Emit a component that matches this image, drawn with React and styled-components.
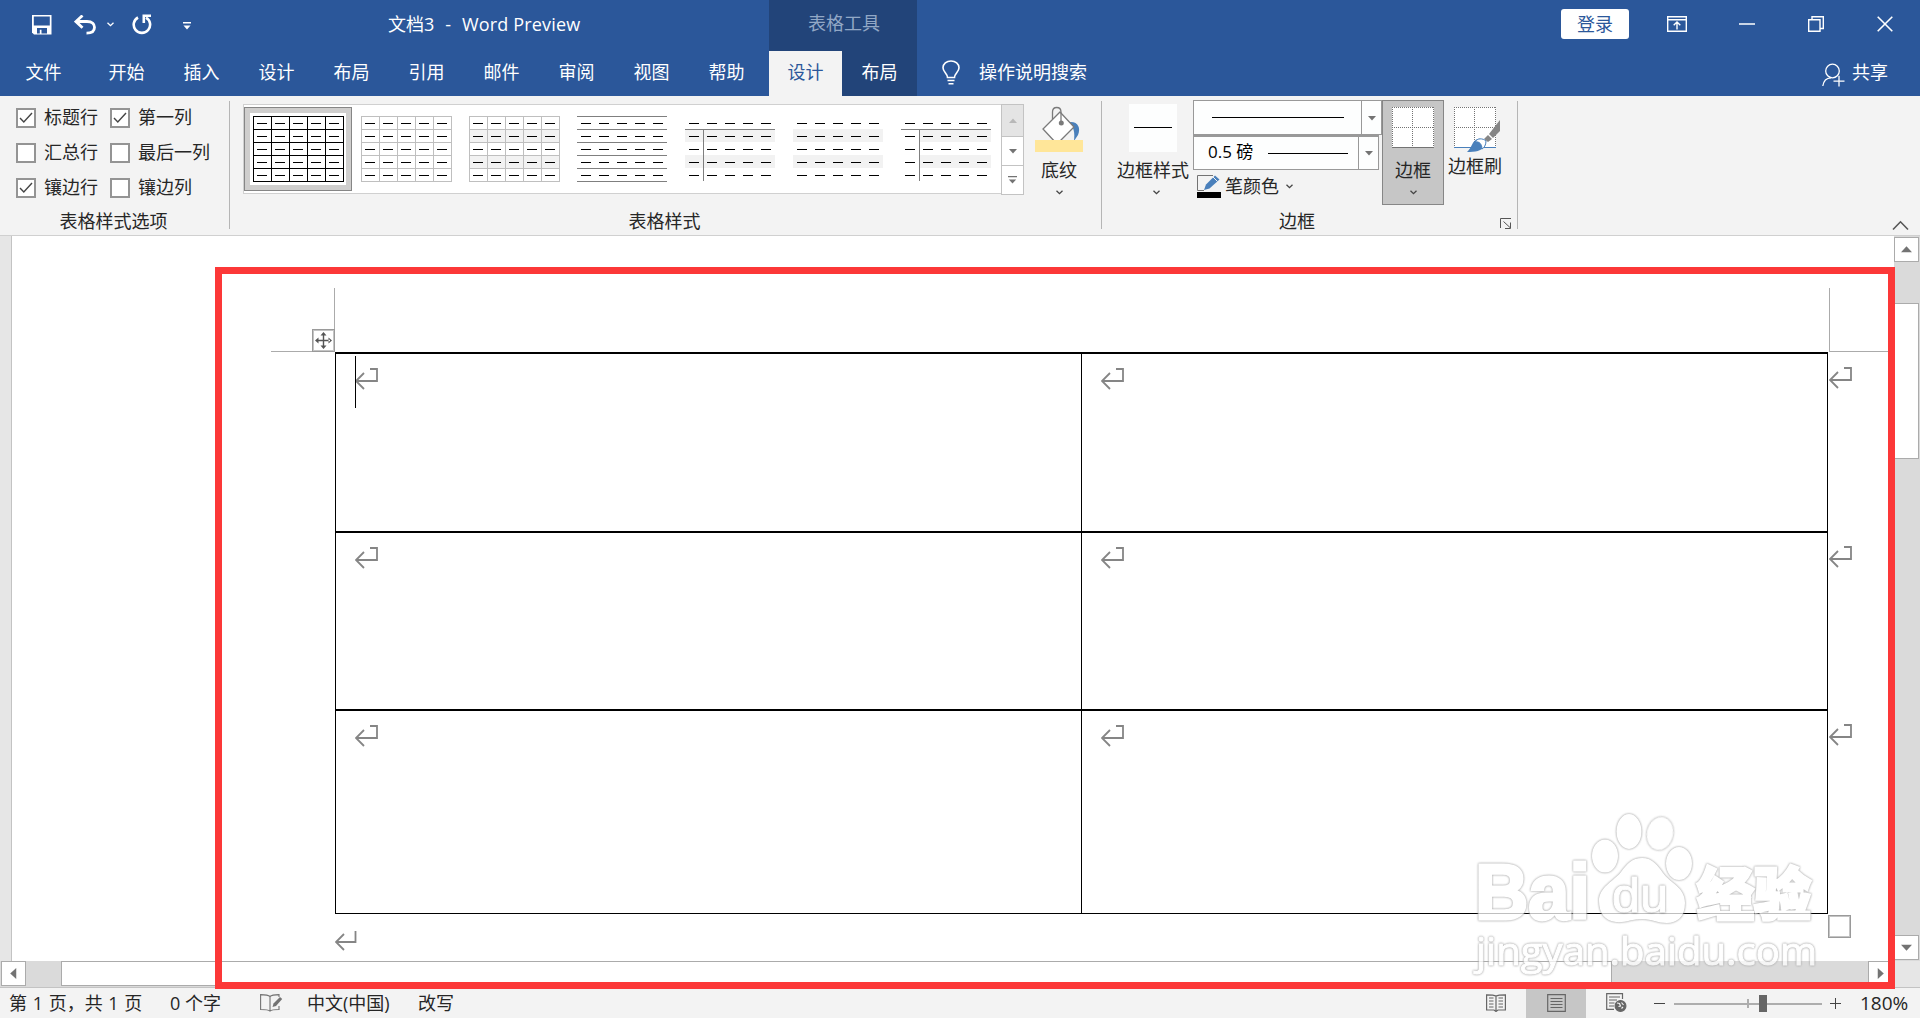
import styled, { createGlobalStyle, css } from 'styled-components'

const GlobalStyle = createGlobalStyle`
  * {
    box-sizing: border-box;
  }

  body {
    margin: 0;
    overflow: hidden;
    font-family: 'Open Sans', 'Noto Sans CJK SC', sans-serif;
    font-size: 18px;
    line-height: 24px;
    color: #262626;
  }

  svg {
    display: block;
    flex: none;
  }
`

const Window = styled.div`
  position: relative;
  display: grid;
  grid-template-rows: 96px 140px 752px 30px;
  width: 1920px;
  height: 1018px;
  overflow: hidden;
  white-space: nowrap;
`

/* header */

const Header = styled.header`
  display: grid;
  grid-template-columns: 769px 148px 1fr;
  background: #2b579a;
  color: #fff;
`

const HeaderPart = styled.div`
  display: grid;
  grid-template-rows: 51px 45px;
  background: ${(p) => (p.$dark ? '#224479' : 'transparent')};
`

const TitleRow = styled.div`
  display: flex;
  align-items: center;
  padding-bottom: 4px;
  padding-left: ${(p) => p.$left || 0}px;
`

const QuickTools = styled.div`
  display: flex;
  align-items: center;
  width: 356px;
  padding-top: 2px;
`

const Title = styled.div`
  display: flex;
  gap: 11px;

  & > :last-child {
    letter-spacing: 0.15px;
  }
`

const ContextTitle = styled.div`
  display: flex;
  justify-content: center;
  align-items: center;
  padding: 0 0 5px 2px;
  color: #92a8c6;
`

const TabRow = styled.nav`
  display: flex;
`

const Tab = styled.div`
  display: flex;
  justify-content: center;
  align-items: center;
  padding-bottom: 3px;
  padding-right: ${(p) => (p.$file ? 2 : 0)}px;
  width: ${(p) => p.$width || 75}px;
  color: ${(p) => (p.$active ? '#2b579a' : '#fff')};
  background: ${(p) => (p.$active ? '#f3f3f3' : 'transparent')};
`

const Search = styled.div`
  display: flex;
  align-items: center;
  gap: 19px;
  padding: 0 0 3px 25px;
`

const Share = styled.div`
  display: flex;
  align-items: center;
  gap: 7px;
  margin-left: auto;
  padding: 0 32px 3px 0;

  & > svg {
    margin-top: 5px;
  }
`

const Login = styled.button`
  width: 68px;
  height: 30px;
  margin: 0 38px 0 644px;
  padding: 0;
  border: 0;
  border-radius: 3px;
  background: #fff;
  color: #2b579a;
  font: inherit;
`

const WindowButtons = styled.div`
  display: flex;
  align-items: center;
`

/* ribbon */

const Ribbon = styled.section`
  position: relative;
  display: flex;
  background: #f3f3f3;
  border-bottom: 1px solid #d0d0d0;
`

const Group = styled.div`
  position: relative;
  display: flex;
  flex-direction: column;
  width: ${(p) => p.$width}px;

  &::after {
    content: '';
    position: absolute;
    top: 5px;
    right: 0;
    width: 1px;
    height: 128px;
    background: #b5b5b5;
  }
`

const GroupBody = styled.div`
  display: flex;
  height: 113px;
`

const GroupName = styled.div`
  text-align: center;
  padding-right: ${(p) => p.$shift || 0}px;
`

const Options = styled.div`
  display: grid;
  grid-template-columns: 94px 1fr;
  grid-template-rows: repeat(3, 35px);
  padding: 4px 0 0 16px;
`

const Option = styled.label`
  display: flex;
  align-items: center;
  gap: 8px;
`

const OptionText = styled.span`
  padding-bottom: 2px;
`

const Check = styled.span`
  display: grid;
  place-items: center;
  width: 20px;
  height: 20px;
  border: 2px solid #949494;
  background: #fff;
`

const Gallery = styled.div`
  display: flex;
  width: 781px;
  height: 91px;
  margin: 8px 0 0 13px;
`

const GalleryItems = styled.div`
  display: flex;
  width: 758px;
  height: 90px;
  padding-top: 2px;
  border: 1px solid #d0d0d0;
  border-right: 0;
  background: #fff;
`

const GalleryItem = styled.div`
  width: 108px;
  height: 84px;
  padding: 8px 0 0 8px;
  border: 1px solid transparent;

  ${(p) =>
    p.$selected &&
    css`
      padding: 5px;
      border-color: #868686;
      background: #cfcecd;

      & > svg {
        width: 96px;
        height: 72px;
        padding: 3px 2px 2px 3px;
        background: #fff;
      }
    `}
`

const GalleryScroll = styled.div`
  display: grid;
  grid-template-rows: 33px 29px 29px;
  width: 23px;
`

const ScrollCell = styled.div`
  display: grid;
  place-items: center;
  border: 1px solid #c3c3c3;
  border-top-width: ${(p) => (p.$first ? 1 : 0)}px;
  background: ${(p) => (p.$first ? '#e4e4e4' : '#fff')};
`

const BigButton = styled.div`
  display: flex;
  flex-direction: column;
  align-items: center;
  width: ${(p) => p.$width}px;
  height: 105px;
  margin: 4px 0 0 ${(p) => p.$left || 0}px;
  border: 1px solid ${(p) => (p.$pressed ? '#868686' : 'transparent')};
  background: ${(p) => (p.$pressed ? '#c6c6c6' : 'transparent')};
`

const BigIcon = styled.div`
  display: flex;
  height: ${(p) => p.$height || 57}px;
  padding: 3px 0 0 ${(p) => p.$left || 0}px;
`

const Label = styled.div`
  height: 24px;
  margin-bottom: 8px;
`

const PenColumn = styled.div`
  width: 189px;
  padding-top: 4px;
`

const Combo = styled.div`
  display: flex;
  align-items: center;
  width: ${(p) => p.$width}px;
  height: 35px;
  border: 1px solid #999;
  border-top-width: ${(p) => (p.$second ? 2 : 1)}px;
  padding-left: ${(p) => p.$left}px;
  background: #fdfefe;
  color: #000;
`

const ComboText = styled.span`
  width: 60px;
  padding-bottom: 2px;
  font-size: 17px;
`

const Stroke = styled.span`
  width: ${(p) => p.$width}px;
  height: 1px;
  background: #000;
`

const ComboArrow = styled.span`
  display: grid;
  place-items: center;
  align-self: stretch;
  width: 20px;
  margin-left: auto;
  border-left: 1px solid #999;
`

const PenColor = styled.div`
  display: flex;
  align-items: center;
  gap: 4px;
  height: 32px;
  padding-left: 4px;
`

const Launcher = styled.div`
  position: absolute;
  right: 6px;
  top: 122px;
`

const Collapse = styled.div`
  position: absolute;
  right: 11px;
  top: 124px;
`

/* document */

const Workspace = styled.main`
  display: grid;
  grid-template-columns: 12px 1882px 26px;
  grid-template-rows: 725px 27px;
  background: #e6e6e6;
`

const Gutter = styled.div`
  border-right: 1px solid #c3c3c3;
`

const Page = styled.div`
  position: relative;
  padding-top: 52px;
  background: #fff;
`

const Margins = styled.div`
  display: flex;
  justify-content: space-between;
  height: 64px;
  padding-left: 259px;
`

const Corner = styled.div`
  width: ${(p) => (p.$right ? 65 : 64)}px;
  border: solid #ababab;
  border-width: ${(p) => (p.$right ? '0 0 1px 1px' : '0 1px 1px 0')};
`

const Table = styled.div`
  display: grid;
  grid-template-columns: 746px 746px 60px;
  grid-template-rows: 179px 178px 205px;
  margin-left: 323px;
`

const Cell = styled.div`
  padding: 14px 0 0 19px;
  border: solid #000;
  border-width: 2px 0 ${(p) => (p.$last ? 1 : 0)}px 1px;
`

const RowEnd = styled.div`
  padding: 15px 0 0 1px;
  border-left: 1px solid #000;
`

const LastMark = styled.div`
  padding: 17px 0 0 323px;
`

const Handle = styled.div`
  position: absolute;
  left: 300px;
  top: 93px;
  width: 23px;
  height: 23px;
  display: grid;
  place-items: center;
  border: 1px solid #9a9a9a;
  box-shadow: inset 0 0 0 1px #c4c4c4;
  background: #fff;
`

const Resize = styled(Handle)`
  left: 1816px;
  top: 679px;
`

const Caret = styled.div`
  position: absolute;
  left: 343px;
  top: 120px;
  width: 1px;
  height: 52px;
  background: #000;
`

const VScroll = styled.div`
  display: flex;
  flex-direction: column;
  height: 725px;
  padding: 1px 1px 0 0;
  background: #dadada;
`

const HScroll = styled.div`
  display: flex;
  width: 1894px;
  height: 26px;
  padding-left: 1px;
  background: #dadada;
`

const ScrollButton = styled.div`
  display: grid;
  place-items: center;
  flex: none;
  width: 25px;
  height: 25px;
  border: 1px solid #ababab;
  background: #fff;
`

const Track = styled.div`
  flex: none;
  width: ${(p) => p.$width || 25}px;
  height: ${(p) => p.$height || 25}px;
`

const Thumb = styled(Track)`
  border: 1px solid #ababab;
  background: #fff;
`

const ScrollCorner = styled.div`
  grid-column: 1 / 4;
  display: flex;
  border-bottom: 1px solid #c3c3c3;
`

/* status bar */

const Status = styled.footer`
  display: flex;
  align-items: center;
  padding-left: 9px;
  background: #f3f3f3;
`

const StatusText = styled.div`
  width: ${(p) => p.$width}px;
  padding-bottom: 1px;
  word-spacing: ${(p) => p.$space || 0}px;
`

const Views = styled.div`
  display: flex;
  align-self: stretch;
  margin-left: auto;
`

const View = styled.div`
  display: grid;
  place-items: center;
  width: 60px;
  padding-bottom: 1px;
  background: ${(p) => (p.$active ? '#c6c6c6' : 'transparent')};
`

const Zoom = styled.div`
  display: flex;
  align-items: center;
  width: 274px;
  padding-left: 7px;
`

const Percent = styled.div`
  margin-left: 17px;
  font-size: 19px;
`

/* overlays */

const Frame = styled.div`
  position: absolute;
  left: 215px;
  top: 267px;
  width: 1680px;
  height: 722px;
  border: 7px solid #fc3838;
`

const Watermark = styled.svg`
  position: absolute;
  left: 1465px;
  top: 800px;
  overflow: visible;
  opacity: 0.75;
  fill: #fff;

  & > * {
    filter: drop-shadow(0 0 1px #999) drop-shadow(0 0 0.5px #bbb);
  }
`

const WatermarkText = styled.text`
  font-family: ${(p) => p.$font};
  font-size: ${(p) => p.$size}px;
  font-weight: ${(p) => p.$weight || 400};
  stroke: #fff;
  stroke-width: ${(p) => p.$stroke || 0}px;
`

const Down = ({ color = '#fff' }) => (
  <svg width='7' height='5' viewBox='0 0 7 5' fill='none' stroke={color} strokeWidth='1.3'>
    <path d='M.5 .7 3.5 3.7 6.5 .7' />
  </svg>
)

const Triangle = ({ dir = 'down', color = '#737373', w = 8 }) => {
  const turn = { down: 0, up: 180, left: 90, right: 270 }[dir]
  return (
    <svg width={w} height={w} viewBox='0 0 10 10' fill={color}>
      <path d='M0 2.5H10L5 8Z' transform={`rotate(${turn} 5 5)`} />
    </svg>
  )
}

const ReturnMark = () => (
  <svg width='23' height='22' viewBox='0 0 23 22' fill='none' stroke='#858585' strokeWidth='1.8'>
    <path d='M15 1H22V13H1M9 5 1 13 9 21' />
  </svg>
)

const borders = {
  black: '#000',
  gray: '#bfbfbf',
  dark: '#7f7f7f',
}

const styles = [
  { grid: 'black' },
  { grid: 'gray' },
  { grid: 'gray', band: 0 },
  { rows: 'dark' },
  { head: true, band: 0 },
  { band: 0 },
  { head: true, band: 18 },
]

const n5 = [0, 1, 2, 3, 4]
const n6 = [0, 1, 2, 3, 4, 5]

const TableThumb = ({ grid, rows, head, band }) => (
  <svg width='91' height='67' viewBox='0 0 91 67' shapeRendering='crispEdges'>
    {band !== undefined &&
      [13, 39].map((y) => <rect key={y} x={band} y={y} width={90 - band} height='13' fill='#f2f2f2' />)}
    {(grid || rows) &&
      n6.map((i) => <rect key={i} y={i * 13} width={grid ? 91 : 90} height='1' fill={borders[grid || rows]} />)}
    {grid && n6.map((i) => <rect key={i} x={i * 18} width='1' height='66' fill={borders[grid]} />)}
    {head && <path d='M0 13.5H90M18.5 13V65' stroke='#7f7f7f' />}
    {n5.map((r) => n5.map((c) => <rect key={`${r}${c}`} x={c * 18 + 4} y={r * 13 + 7} width='10' height='1' />))}
  </svg>
)

const BorderGrid = ({ brush }) => (
  <svg width={brush ? 46 : 42} height='48' viewBox={`0 0 ${brush ? 46 : 42} 48`}>
    <rect x='0' y='3' width='42' height='41' fill='#fff' />
    <path
      d='M0 3.5H42M0 23.5H42M.5 3V43M20.5 3V43M41.5 3V43'
      stroke='#737373'
      strokeDasharray='1 1'
      shapeRendering='crispEdges'
    />
    <path d='M0 43.5H42' stroke={brush ? '#4a80bb' : '#737373'} />
    {brush && (
      <g>
        <path d='M46 16V27L39 34 35 30Z' fill='#858585' />
        <path d='M34 31 38 35 34 38 30 35Z' fill='#858585' />
        <path d='M13 48C18 44 18 36 24 35 30 34 33 38 31 42 28 47 21 48 13 48Z' fill='#4a80bb' />
        <path d='M21 38C23 34 29 34 32 37 32 41 30 44 28 45 28 40 25 37 21 38Z' fill='#fff' stroke='#4a80bb' />
      </g>
    )}
  </svg>
)

const options = [
  ['标题行', true],
  ['第一列', true],
  ['汇总行', false],
  ['最后一列', false],
  ['镶边行', true],
  ['镶边列', false],
]

const tabs = ['开始', '插入', '设计', '布局', '引用', '邮件', '审阅', '视图', '帮助']

const App = () => {
  return (
    <Window>
      <GlobalStyle />
      <Header>
        <HeaderPart>
          <TitleRow $left={32}>
            <QuickTools>
              <svg width='20' height='20' viewBox='0 0 20 20'>
                <path d='M0 0H19.5V19.5H2L0 17.5Z' fill='#fff' />
                <path d='M1.8 1.5H17.8V10.5H1.8ZM5 13H15V18.5H9.5V14.7H7.8V18.5H5Z' fill='#2b579a' />
              </svg>
              <svg width='22' height='20' viewBox='0 0 22 20' style={{ marginLeft: 22 }} fill='none' stroke='#fff'>
                <path d='M2 6.5H13C18.5 6.5 20.5 9.5 20.5 12.3 20.5 16 17.5 18.2 12.5 18.2' strokeWidth='2.8' />
                <path d='M8.5 .5 2 6.6 8.5 12.8' strokeWidth='2.8' />
              </svg>
              <div style={{ margin: '0 18px 0 11px' }}>
                <Down />
              </div>
              <svg width='20' height='21' viewBox='0 0 20 21' fill='none' stroke='#fff' strokeWidth='2.6'>
                <path d='M6 3.5A8.2 8.2 0 1 0 14 3.6' />
                <path d='M19 1.7H11.8V9' />
              </svg>
              <svg width='8' height='8' viewBox='0 0 8 8' style={{ margin: '2px 0 0 31px' }} fill='#fff'>
                <path d='M0 0H8V1.5H0ZM.5 3.5H7.5L4 7.5Z' />
              </svg>
            </QuickTools>
            <Title>
              <span>文档3</span>
              <span>-</span>
              <span>Word Preview</span>
            </Title>
          </TitleRow>
          <TabRow>
            <Tab $width={89} $file>
              文件
            </Tab>
            {tabs.map((tab) => (
              <Tab key={tab}>{tab}</Tab>
            ))}
          </TabRow>
        </HeaderPart>
        <HeaderPart $dark>
          <ContextTitle>表格工具</ContextTitle>
          <TabRow>
            <Tab $active $width={73}>
              设计
            </Tab>
            <Tab>布局</Tab>
          </TabRow>
        </HeaderPart>
        <HeaderPart>
          <TitleRow>
            <Login>登录</Login>
            <WindowButtons>
              <svg width='20' height='16' viewBox='0 0 20 16' fill='none' stroke='#fff' strokeWidth='1.4'>
                <path d='M.7 .7H19.3V15.3H.7ZM.7 3.8H19.3M10 13.5V6.2M6.7 9.2 10 6 13.3 9.2' />
              </svg>
              <svg width='16' height='2' style={{ marginLeft: 52 }}>
                <path d='M0 1H16' stroke='#fff' strokeWidth='1.5' />
              </svg>
              <svg width='16' height='16' style={{ marginLeft: 53 }} fill='none' stroke='#fff' strokeWidth='1.4'>
                <path d='M.7 3.7H12V15.3H.7ZM4 3.7V.8H15.3V12.5H12' />
              </svg>
              <svg width='16' height='16' style={{ marginLeft: 53 }} stroke='#fff' strokeWidth='1.6'>
                <path d='M.7 .7 15.3 15.3M15.3 .7 .7 15.3' />
              </svg>
            </WindowButtons>
          </TitleRow>
          <TabRow>
            <Search>
              <svg width='18' height='25' viewBox='0 0 18 25' fill='none' stroke='#fff' strokeWidth='1.6'>
                <path d='M5.5 17.5C5.5 13.5 1 12 1 7.8 1 4 4.5 1 9 1S17 4 17 7.8C17 12 12.5 13.5 12.5 17.5ZM5.5 20.5H12.5M6.5 23.7H11.5' />
              </svg>
              <span>操作说明搜索</span>
            </Search>
            <Share>
              <svg width='23' height='24' viewBox='0 0 23 24' fill='none' stroke='#fff' strokeWidth='1.3'>
                <circle cx='10.5' cy='8' r='6.8' />
                <path d='M.8 23C1.5 18 4.5 15 9 14.8M11.5 18.2H22.5M17 12.8V23.5' />
              </svg>
              <span>共享</span>
            </Share>
          </TabRow>
        </HeaderPart>
      </Header>

      <Ribbon>
        <Group $width={230}>
          <GroupBody>
            <Options>
              {options.map(([label, on]) => (
                <Option key={label}>
                  <Check>
                    {on && (
                      <svg width='14' height='12' fill='none' stroke='#444' strokeWidth='1.4'>
                        <path d='M1 6 4.8 10 13 1' />
                      </svg>
                    )}
                  </Check>
                  <OptionText>{label}</OptionText>
                </Option>
              ))}
            </Options>
          </GroupBody>
          <GroupName $shift={3}>表格样式选项</GroupName>
        </Group>

        <Group $width={872}>
          <GroupBody>
            <Gallery>
              <GalleryItems>
                {styles.map((style, i) => (
                  <GalleryItem key={i} $selected={i === 0}>
                    <TableThumb {...style} />
                  </GalleryItem>
                ))}
              </GalleryItems>
              <GalleryScroll>
                <ScrollCell $first>
                  <Triangle dir='up' color='#b8b8b8' />
                </ScrollCell>
                <ScrollCell>
                  <Triangle />
                </ScrollCell>
                <ScrollCell>
                  <svg width='9' height='8' fill='#737373'>
                    <path d='M0 0H9V1.2H0ZM.8 3.5H8.2L4.5 7.5Z' />
                  </svg>
                </ScrollCell>
              </GalleryScroll>
            </Gallery>
            <BigButton $width={60} $left={5}>
              <BigIcon>
                <svg width='48' height='50' viewBox='0 0 48 50'>
                  <path d='M36 18C43 18 46 24 43 31L39 37C40 29 39 23 34 18Z' fill='#4a80bb' />
                  <path d='M25 8 39 23 22 40 8 25Z' fill='#fff' stroke='#7a7a7a' strokeWidth='1.3' />
                  <path d='M17.5 15V8C17.5 2 26 2 26 8V18' fill='none' stroke='#7a7a7a' strokeWidth='1.3' />
                  <circle cx='26.3' cy='19' r='2.5' fill='#7a7a7a' />
                  <rect y='36' width='48' height='12' fill='#ffe699' />
                </svg>
              </BigIcon>
              <Label>底纹</Label>
              <Down color='#444' />
            </BigButton>
          </GroupBody>
          <GroupName $shift={3}>表格样式</GroupName>
        </Group>

        <Group $width={416}>
          <GroupBody>
            <BigButton $width={80} $left={11}>
              <BigIcon>
                <svg width='48' height='48' shapeRendering='crispEdges'>
                  <rect width='48' height='48' fill='#fdfefe' />
                  <rect x='5' y='23' width='38' height='1' />
                </svg>
              </BigIcon>
              <Label>边框样式</Label>
              <div style={{ paddingLeft: 6 }}>
                <Down color='#444' />
              </div>
            </BigButton>
            <PenColumn>
              <Combo $width={189} $left={18}>
                <Stroke $width={132} />
                <ComboArrow>
                  <Triangle />
                </ComboArrow>
              </Combo>
              <Combo $width={186} $left={14} $second>
                <ComboText>0.5 磅</ComboText>
                <Stroke $width={80} />
                <ComboArrow>
                  <Triangle />
                </ComboArrow>
              </Combo>
              <PenColor>
                <svg width='24' height='24' viewBox='0 0 24 24'>
                  <path d='M16 1.5H.5V16.5H7' fill='none' stroke='#737373' />
                  <path d='M7 16 9 10.5 18 1.5 22.5 5.5 12.5 14.5Z' fill='#4a80bb' />
                  <path d='M16 3 20.5 7.5' stroke='#f3f3f3' />
                  <rect y='18' width='24' height='6' />
                </svg>
                笔颜色
                <div style={{ marginLeft: 3 }}>
                  <Down color='#444' />
                </div>
              </PenColor>
            </PenColumn>
            <BigButton $width={62} $pressed>
              <BigIcon>
                <BorderGrid />
              </BigIcon>
              <Label>边框</Label>
              <Down color='#444' />
            </BigButton>
            <BigButton $width={62}>
              <BigIcon $height={53} $left={3}>
                <BorderGrid brush />
              </BigIcon>
              <Label>边框刷</Label>
            </BigButton>
          </GroupBody>
          <GroupName $shift={26}>边框</GroupName>
          <Launcher>
            <svg width='12' height='11' fill='none' stroke='#555'>
              <path d='M.5 10V.5H11M3.5 3.5 10 9.5M5 10.5H10.5V4.5' />
            </svg>
          </Launcher>
        </Group>
        <Collapse>
          <svg width='17' height='11' fill='none' stroke='#555' strokeWidth='1.6'>
            <path d='M1 9.5 8.5 1.8 16 9.5' />
          </svg>
        </Collapse>
      </Ribbon>

      <Workspace>
        <Gutter />
        <Page>
          <Margins>
            <Corner />
            <Corner $right />
          </Margins>
          <Table>
            {[0, 1, 2].map((row) => [
              <Cell key={`a${row}`} $last={row === 2}>
                <ReturnMark />
              </Cell>,
              <Cell key={`b${row}`} $last={row === 2}>
                <ReturnMark />
              </Cell>,
              <RowEnd key={`c${row}`}>
                <ReturnMark />
              </RowEnd>,
            ])}
          </Table>
          <LastMark>
            <svg width='22' height='20' fill='none' stroke='#858585' strokeWidth='1.8'>
              <path d='M20.5 0V11H1M9 3 1 11 9 19' />
            </svg>
          </LastMark>
          <Handle>
            <svg width='17' height='17' viewBox='0 0 17 17' fill='#555'>
              <path d='M7.8 2H9.2V15H7.8ZM2 7.8H15V9.2H2ZM8.5 0 11.5 3.5H5.5ZM8.5 17 5.5 13.5H11.5ZM0 8.5 3.5 5.5V11.5ZM17 8.5 13.5 5.5V11.5Z' />
            </svg>
          </Handle>
          <Caret />
          <Resize />
        </Page>
        <VScroll>
          <ScrollButton>
            <Triangle dir='up' w={11} />
          </ScrollButton>
          <Track $height={41} />
          <Thumb $height={156} />
          <Track $height={476} />
          <ScrollButton>
            <Triangle w={11} />
          </ScrollButton>
        </VScroll>
        <ScrollCorner>
          <HScroll>
            <ScrollButton>
              <Triangle dir='left' w={11} />
            </ScrollButton>
            <Track $width={35} />
            <Thumb $width={1551} />
            <Track $width={256} />
            <ScrollButton>
              <Triangle dir='right' w={11} />
            </ScrollButton>
          </HScroll>
        </ScrollCorner>
      </Workspace>

      <Status>
        <StatusText $width={161} $space={1}>
          第 1 页，共 1 页
        </StatusText>
        <StatusText $width={90}>0 个字</StatusText>
        <StatusText $width={47}>
          <svg width='23' height='18' viewBox='0 0 23 18' fill='none' stroke='#737373' strokeWidth='1.1'>
            <path d='M10 2.5C8.5 1 7 .6 .6 .6V15.5C6 15.5 8.5 15.8 10 17 11.5 15.8 13 15.5 19 15.5V12M10 2.5V17M10 2.5C11.5 1 13 .6 19 .6V3' />
            <path d='M12.5 13 13.5 9.5 20 3 22.2 5 16 12Z' fill='#737373' stroke='none' />
          </svg>
        </StatusText>
        <StatusText $width={111}>中文(中国)</StatusText>
        <StatusText $width={60}>改写</StatusText>
        <Views>
          <View>
            <svg width='20' height='18' viewBox='0 0 20 18' fill='none' stroke='#666' strokeWidth='1.2'>
              <path d='M10 2C8 .8 6 .8 .6 .8V16H8L10 17.5 12 16H19.4V.8C14 .8 12 .8 10 2ZM10 2V17M3 4H7.5M3 7H7.5M3 10H7.5M3 13H7.5M12.5 4H17M12.5 7H17M12.5 10H17M12.5 13H17' />
            </svg>
          </View>
          <View $active>
            <svg width='19' height='18' fill='none' stroke='#666' strokeWidth='1.2'>
              <path d='M.7 .7H18.3V17.3H.7ZM3.5 4.5H15.5M3.5 7.5H15.5M3.5 10.5H15.5M3.5 13.5H15.5' />
            </svg>
          </View>
          <View>
            <svg width='21' height='19' viewBox='0 0 21 19' fill='none' stroke='#666' strokeWidth='1.2'>
              <path d='M16.5 6V.7H.7V16.3H8M3 4H14M3 7H11M3 10H8.5M3 13H8' />
              <circle cx='14.5' cy='13' r='5.4' fill='#666' />
              <path d='M11 10 13.5 10.5 14.5 13 12.5 13.5M15.5 9.5 17.5 12M15.5 15.5 17 14' stroke='#f3f3f3' />
            </svg>
          </View>
        </Views>
        <Zoom>
          <svg width='190' height='19' shapeRendering='crispEdges'>
            <rect x='1' y='9' width='11' height='1' fill='#444' />
            <rect x='21' y='9' width='148' height='2' fill='#adadad' />
            <rect x='94' y='5' width='2' height='9' fill='#adadad' />
            <rect x='106' y='1' width='8' height='17' fill='#666' />
            <path d='M177 9.5H188M182.5 4V15' stroke='#444' />
          </svg>
          <Percent>180%</Percent>
        </Zoom>
      </Status>

      <Frame />
      <Watermark width='370' height='180'>
        <ellipse cx='140' cy='56' rx='13' ry='16.5' />
        <ellipse cx='164' cy='31.5' rx='12.5' ry='17.5' />
        <ellipse cx='195' cy='33.5' rx='13' ry='16.5' transform='rotate(12 195 33.5)' />
        <ellipse cx='214' cy='63.5' rx='13' ry='16.5' />
        <path d='M177 58C188 58 193 66 198 73 205 83 220 87 220 103 220 117 212 123 202 123 192 123 187 119 177 119 167 119 160 123 151 122 140 121 134 113 134 101 134 87 149 81 156 72 162 64 167 58 177 58Z' />
        <WatermarkText x='10' y='119' textLength='115' lengthAdjust='spacingAndGlyphs' $font='Liberation Sans' $size={77} $weight={700} $stroke={3}>
          Bai
        </WatermarkText>
        <WatermarkText x='147' y='112' textLength='56' lengthAdjust='spacingAndGlyphs' $font='Liberation Sans' $size={48} $stroke={1}>
          du
        </WatermarkText>
        <WatermarkText x='232' y='115' $font='Noto Sans CJK SC' $size={57} $weight={900} $stroke={3}>
          经验
        </WatermarkText>
        <WatermarkText x='11' y='165' textLength='341' lengthAdjust='spacingAndGlyphs' $font='Open Sans' $size={39} $stroke={1}>
          jingyan.baidu.com
        </WatermarkText>
      </Watermark>
    </Window>
  )
}

export default App
